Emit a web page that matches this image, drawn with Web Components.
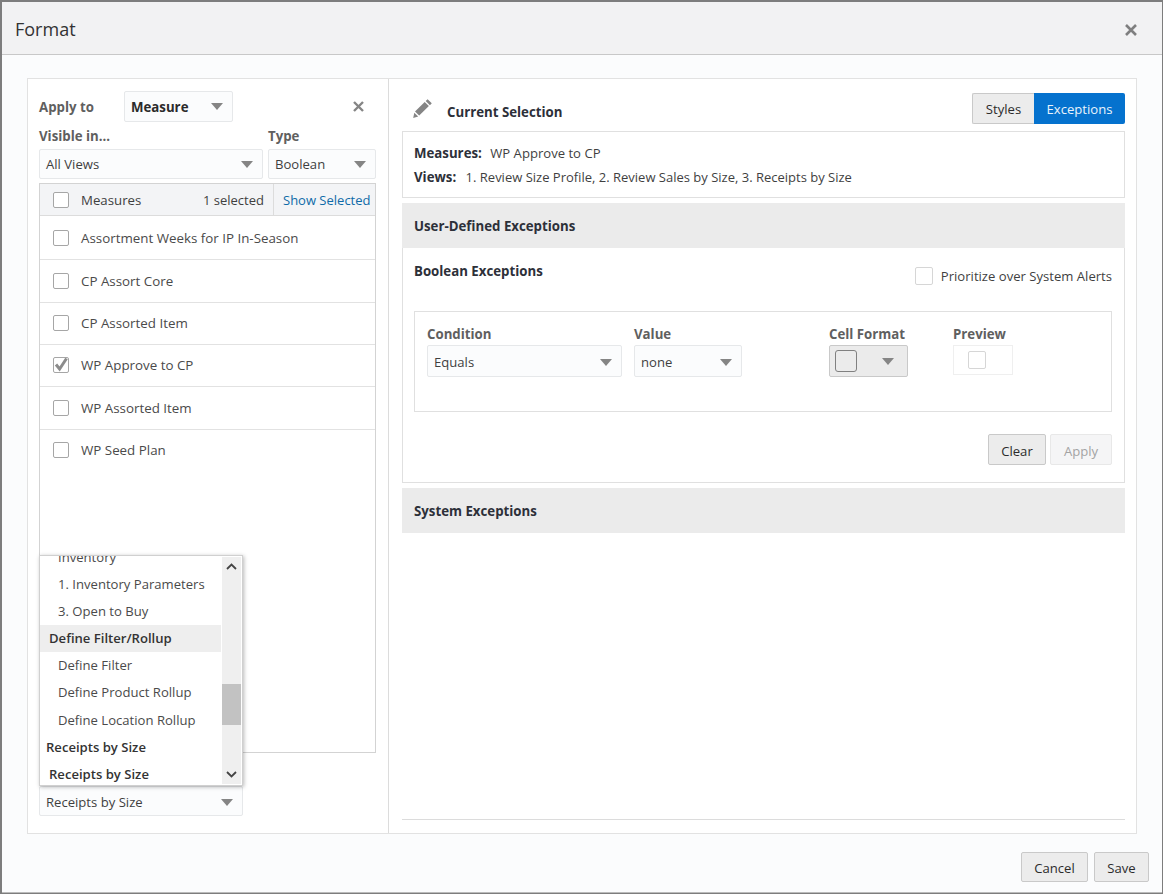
<!DOCTYPE html>
<html>
<head>
<meta charset="utf-8">
<title>Format</title>
<style>
  html, body { margin: 0; height: 894px; overflow: hidden; }
  body { background: #7d7d7d; font: 13.1px "Open Sans", "Liberation Sans", sans-serif; color: #3d3d3d; }
</style>
</head>
<body>
<format-dialog>
  <left-pane slot="left"></left-pane>
  <right-pane slot="right"></right-pane>
</format-dialog>

<script>
  const ARROW = `<svg width="12" height="7" viewBox="0 0 12 7"><path d="M0 0h12L6 7z" fill="#858585"/></svg>`;

  class XSelect extends HTMLElement {
    connectedCallback() {
      this.attachShadow({ mode: 'open' });
      this.shadowRoot.innerHTML = `
        <style>
          :host { display: flex; box-sizing: border-box; align-items: center; justify-content: space-between;
            height: 31px; padding: 0 9px 0 6px; background: #fbfcfd; border: 1px solid #e6e8ea; border-radius: 2px;
            color: #3f3f3f; }
          :host([strong]) { font-weight: 700; color: #2b2b2b; font-size: 13.25px; }
        </style>
        <span><slot></slot></span>${ARROW}
      `;
    }
  }
  customElements.define('x-select', XSelect);

  class XCheck extends HTMLElement {
    connectedCallback() {
      this.attachShadow({ mode: 'open' });
      const tick = this.hasAttribute('checked')
        ? `<svg width="16" height="16" viewBox="0 0 16 16"><path d="M3 7.5l3.6 4.5L13.5 1.5" fill="none" stroke="#8c8c8c" stroke-width="3"/></svg>`
        : '';
      this.shadowRoot.innerHTML = `
        <style>
          :host { display: inline-flex; box-sizing: border-box; width: 16px; height: 16px; flex: none;
            background: #fff; border: 1px solid #a6a6a6; border-radius: 2px; align-items: center; justify-content: center; }
          :host([light]) { border-color: #d6d6d6; width: 18px; height: 18px; }
          svg { flex: none; margin: -1px; }
        </style>
        ${tick}
      `;
    }
  }
  customElements.define('x-check', XCheck);

  class XButton extends HTMLElement {
    connectedCallback() {
      this.attachShadow({ mode: 'open' });
      this.shadowRoot.innerHTML = `
        <style>
          :host { display: inline-flex; box-sizing: border-box; align-items: center; justify-content: center;
            height: 31px; padding: 2px 12px 0; background: #ececec; border: 1px solid #c9c9c9; border-radius: 2px;
            color: #2b2b2b; }
          :host([disabled]) { background: #f5f5f6; border-color: #e8e8e8; color: #a3a3a3; }
        </style>
        <slot></slot>
      `;
    }
  }
  customElements.define('x-button', XButton);

  class MeasureList extends HTMLElement {
    connectedCallback() {
      this.attachShadow({ mode: 'open' });
      const rows = [
        ['Assortment Weeks for IP In-Season', 44, 0],
        ['CP Assort Core', 43, 0],
        ['CP Assorted Item', 42, 2],
        ['WP Approve to CP', 42, 2, true],
        ['WP Assorted Item', 43, 0],
        ['WP Seed Plan', 42, 2]
      ];
      const html = rows.map(([name, h, pb, on]) => `
        <div class="row" style="height:${h}px;padding-bottom:${pb}px"><x-check ${on ? 'checked' : ''}></x-check><span>${name}</span></div>`).join('');
      this.shadowRoot.innerHTML = `
        <style>
          :host { display: block; box-sizing: border-box; height: 570px; border: 1px solid #d3d3d3; background: #fff; }
          .head { display: flex; align-items: center; height: 31px; background: #f3f4f6; border-bottom: 1px solid #dcdcdc; color: #3f3f3f; font-size: 13px; }
          .head x-check { margin-left: 13px; }
          .head .name { margin-left: 12px; flex: 1; font-size: 13.25px; }
          .head .count { margin-right: 9px; }
          .head .link { align-self: stretch; display: flex; align-items: center; border-left: 1px solid #dcdcdc; padding-left: 9px; width: 92px; color: #0f6ba8; white-space: nowrap; }
          .row { display: flex; align-items: center; box-sizing: border-box; padding-left: 13px; gap: 12px; border-bottom: 1px solid #e2e2e2; color: #4a4a4a; font-size: 13.35px; }
          .row:last-child { border-bottom: 0; }
        </style>
        <div class="head">
          <x-check></x-check>
          <span class="name">Measures</span>
          <span class="count">1 selected</span>
          <span class="link">Show Selected</span>
        </div>
        ${html}
      `;
    }
  }
  customElements.define('measure-list', MeasureList);

  class ViewPopup extends HTMLElement {
    connectedCallback() {
      this.attachShadow({ mode: 'open' });
      const items = [
        ['child', 'Inventory'],
        ['child', '1. Inventory Parameters'],
        ['child', '3. Open to Buy'],
        ['group on', 'Define Filter/Rollup'],
        ['child', 'Define Filter'],
        ['child tall', 'Define Product Rollup'],
        ['child', 'Define Location Rollup'],
        ['top', 'Receipts by Size'],
        ['group', 'Receipts by Size']
      ];
      this.shadowRoot.innerHTML = `
        <style>
          :host { display: flex; position: absolute; left: 11px; top: 476px; width: 204px; height: 231px; box-sizing: border-box;
            background: #fff; border: 1px solid #d0d0d0; box-shadow: 1px 1px 4px rgba(0,0,0,.28); overflow: hidden; }
          .list { flex: 1; overflow: hidden; }
          .item { height: 27px; line-height: 27px; white-space: nowrap; color: #4a4a4a; }
          .item:first-child { margin-top: -12px; }
          .tall { height: 28px; }
          .child { padding-left: 18px; }
          .group { padding-left: 9px; font-weight: 600; color: #333; }
          .top { padding-left: 6px; font-weight: 600; color: #333; }
          .on { background: #eeeeee; }
          .bar { width: 19px; margin: 1px; background: #efefef; display: flex; flex-direction: column; align-items: center; justify-content: space-between; position: relative; }
          .bar svg { margin: 6px 0; }
          .thumb { position: absolute; left: 0; right: 0; top: 127px; height: 41px; background: #c2c2c2; }
        </style>
        <div class="list">
          ${items.map(([c, t]) => `<div class="item ${c}">${t}</div>`).join('')}
        </div>
        <div class="bar">
          <svg width="11" height="7" viewBox="0 0 11 7"><path d="M1 6l4.5-4.5L10 6" fill="none" stroke="#444" stroke-width="1.8"/></svg>
          <div class="thumb"></div>
          <svg width="11" height="7" viewBox="0 0 11 7"><path d="M1 1l4.5 4.5L10 1" fill="none" stroke="#444" stroke-width="1.8"/></svg>
        </div>
      `;
    }
  }
  customElements.define('view-popup', ViewPopup);

  class LeftPane extends HTMLElement {
    connectedCallback() {
      this.attachShadow({ mode: 'open' });
      this.shadowRoot.innerHTML = `
        <style>
          :host { display: block; position: relative; box-sizing: border-box; width: 361px; height: 100%; padding: 12px 12px 0 11px; border-right: 1px solid #dcdcdc; }
          .lab { font-weight: 700; color: #5f5f5f; font-size: 13.25px; }
          .apply { display: flex; align-items: center; height: 31px; }
          .apply .lab { width: 85px; }
          .apply x-select { width: 109px; }
          .apply svg { margin-left: 120px; }
          .labels { display: flex; height: 27px; align-items: center; }
          .labels .lab:first-child { width: 229px; }
          .selects { display: flex; gap: 5px; margin-bottom: 4px; height: 30px; }
          .selects x-select { height: 30px; }
          .selects x-select:first-child { width: 224px; }
          .selects x-select:last-child { width: 108px; }
          .bottom { margin-top: 33px; width: 204px; height: 30px; padding-top: 2px; }
        </style>
        <div class="apply">
          <span class="lab">Apply to</span>
          <x-select strong>Measure</x-select>
          <svg width="11" height="11" viewBox="0 0 11 11"><path d="M1 1l9 9M10 1l-9 9" stroke="#858585" stroke-width="2.4"/></svg>
        </div>
        <div class="labels"><span class="lab">Visible in...</span><span class="lab">Type</span></div>
        <div class="selects"><x-select>All Views</x-select><x-select>Boolean</x-select></div>
        <measure-list></measure-list>
        <x-select class="bottom">Receipts by Size</x-select>
        <view-popup></view-popup>
      `;
    }
  }
  customElements.define('left-pane', LeftPane);

  class RightPane extends HTMLElement {
    connectedCallback() {
      this.attachShadow({ mode: 'open' });
      this.shadowRoot.innerHTML = `
        <style>
          :host { display: flex; flex-direction: column; box-sizing: border-box; flex: 1; height: 100%; padding: 14px 11px 13px 13px; color: #3f3f3f; font-size: 13.1px; }
          .top { display: flex; align-items: flex-start; height: 38px; }
          .top svg { margin: 5px 14px 0 11px; }
          .top .title { font-weight: 700; color: #2d3039; margin-top: 10px; flex: 1; font-size: 13.25px; }
          .seg { display: flex; height: 31px; }
          .seg span { display: flex; align-items: center; justify-content: center; box-sizing: border-box; }
          .seg .a { width: 62px; background: #ececec; border: 1px solid #c9c9c9; border-right: 0; border-radius: 2px 0 0 2px; color: #2b2b2b; }
          .seg .b { width: 91px; background: #0572ce; color: #eaf4fc; border-radius: 0 2px 2px 0; }
          .info { box-sizing: border-box; height: 67px; border: 1px solid #e0e0e0; padding: 9px 11px 0; line-height: 24px; }
          .info b { color: #2d3039; font-weight: 700; margin-right: 5px; font-size: 13.25px; }
          .info .views { font-size: 13px; }
          .info .views b { margin-right: 6px; }
          .sec { display: flex; align-items: center; box-sizing: border-box; height: 45px; margin-top: 5px; padding-left: 12px; background: #ebebeb; font-weight: 700; color: #2d3039; font-size: 13.25px; }
          .body { box-sizing: border-box; height: 235px; border: 1px solid #e0e0e0; border-top: 0; padding: 0 12px 0 11px; }
          .bhead { display: flex; justify-content: space-between; height: 63px; }
          .bhead b { margin-top: 14px; color: #2d3039; font-weight: 700; font-size: 13.25px; }
          .prio { display: flex; align-items: center; gap: 8px; margin-top: 19px; height: 18px; }
          .box { box-sizing: border-box; height: 101px; border: 1px solid #e0e0e0; padding: 13px 12px 0; display: flex; }
          .col b { display: block; height: 20px; line-height: 18px; color: #5f5f5f; font-weight: 700; white-space: nowrap; font-size: 13.25px; }
          .col x-select { height: 32px; padding-top: 2px; }
          .fmt { display: flex; align-items: center; box-sizing: border-box; width: 79px; height: 32px; background: #ebebeb; border: 1px solid #c9c9c9; border-radius: 2px; padding-left: 5px; }
          .fmt i { display: block; box-sizing: border-box; width: 22px; height: 22px; border: 1px solid #808080; border-radius: 3px; margin-right: 25px; }
          .prev { display: flex; align-items: center; box-sizing: border-box; width: 60px; height: 30px; border: 1px solid #efefef; padding-left: 14px; }
          .actions { display: flex; justify-content: flex-end; gap: 4px; margin-top: 22px; }
          .rule { margin-top: auto; border-top: 1px solid #dcdcdc; }
        </style>
        <div class="top">
          <svg width="20" height="20" viewBox="0 0 20 20"><path d="M14.6 1.2l4.2 4-1.9 2-4.2-4.1zM11.7 4.1l4.2 4L6.2 17.6 2 13.6zM1.3 14.8l3.9 3.8-5 1.3z" fill="#858585"/></svg>
          <span class="title">Current Selection</span>
          <div class="seg"><span class="a">Styles</span><span class="b">Exceptions</span></div>
        </div>
        <div class="info">
          <div><b>Measures:</b> WP Approve to CP</div>
          <div class="views"><b>Views:</b> 1. Review Size Profile, 2. Review Sales by Size, 3. Receipts by Size</div>
        </div>
        <div class="sec">User-Defined Exceptions</div>
        <div class="body">
          <div class="bhead">
            <b>Boolean Exceptions</b>
            <div class="prio"><x-check light></x-check><span>Prioritize over System Alerts</span></div>
          </div>
          <div class="box">
            <div class="col" style="width:195px;margin-right:12px"><b>Condition</b><x-select>Equals</x-select></div>
            <div class="col" style="width:108px;margin-right:87px"><b>Value</b><x-select>none</x-select></div>
            <div class="col" style="width:79px;margin-right:45px"><b>Cell Format</b><div class="fmt"><i></i>${ARROW}</div></div>
            <div class="col" style="width:60px"><b>Preview</b><div class="prev"><x-check light></x-check></div></div>
          </div>
          <div class="actions">
            <x-button style="width:58px">Clear</x-button>
            <x-button style="width:62px" disabled>Apply</x-button>
          </div>
        </div>
        <div class="sec">System Exceptions</div>
        <div class="rule"></div>
      `;
    }
  }
  customElements.define('right-pane', RightPane);

  class FormatDialog extends HTMLElement {
    connectedCallback() {
      this.attachShadow({ mode: 'open' });
      this.shadowRoot.innerHTML = `
        <style>
          :host { display: flex; flex-direction: column; box-sizing: border-box; height: 891px; margin: 2px 0 0 2px; width: 1160px;
            background: #fbfcfd; border-bottom: 1px solid #bbb; }
          .head { display: flex; align-items: center; justify-content: space-between; box-sizing: border-box; height: 53px; padding: 2px 25px 0 13px;
            background: #f2f2f3; border-bottom: 1px solid #c8c8c8; }
          .head span { font-size: 18px; color: #333; }
          .head svg { margin-top: 2px; }
          .main { flex: none; display: flex; box-sizing: border-box; width: 1110px; height: 756px; margin: 23px 0 0 25px; background: #fff; border: 1px solid #e2e2e2; }
          .foot { display: flex; justify-content: flex-end; gap: 6px; padding: 18px 13px 0 0; }
          .foot x-button { height: 30px; }
        </style>
        <div class="head">
          <span>Format</span>
          <svg width="12" height="12" viewBox="0 0 12 12"><path d="M1 1l10 10M11 1L1 11" stroke="#7f7f7f" stroke-width="2.6"/></svg>
        </div>
        <div class="main"><slot name="left"></slot><slot name="right"></slot></div>
        <div class="foot">
          <x-button style="width:67px">Cancel</x-button>
          <x-button style="width:55px">Save</x-button>
        </div>
      `;
    }
  }
  customElements.define('format-dialog', FormatDialog);
</script>
</body>
</html>
